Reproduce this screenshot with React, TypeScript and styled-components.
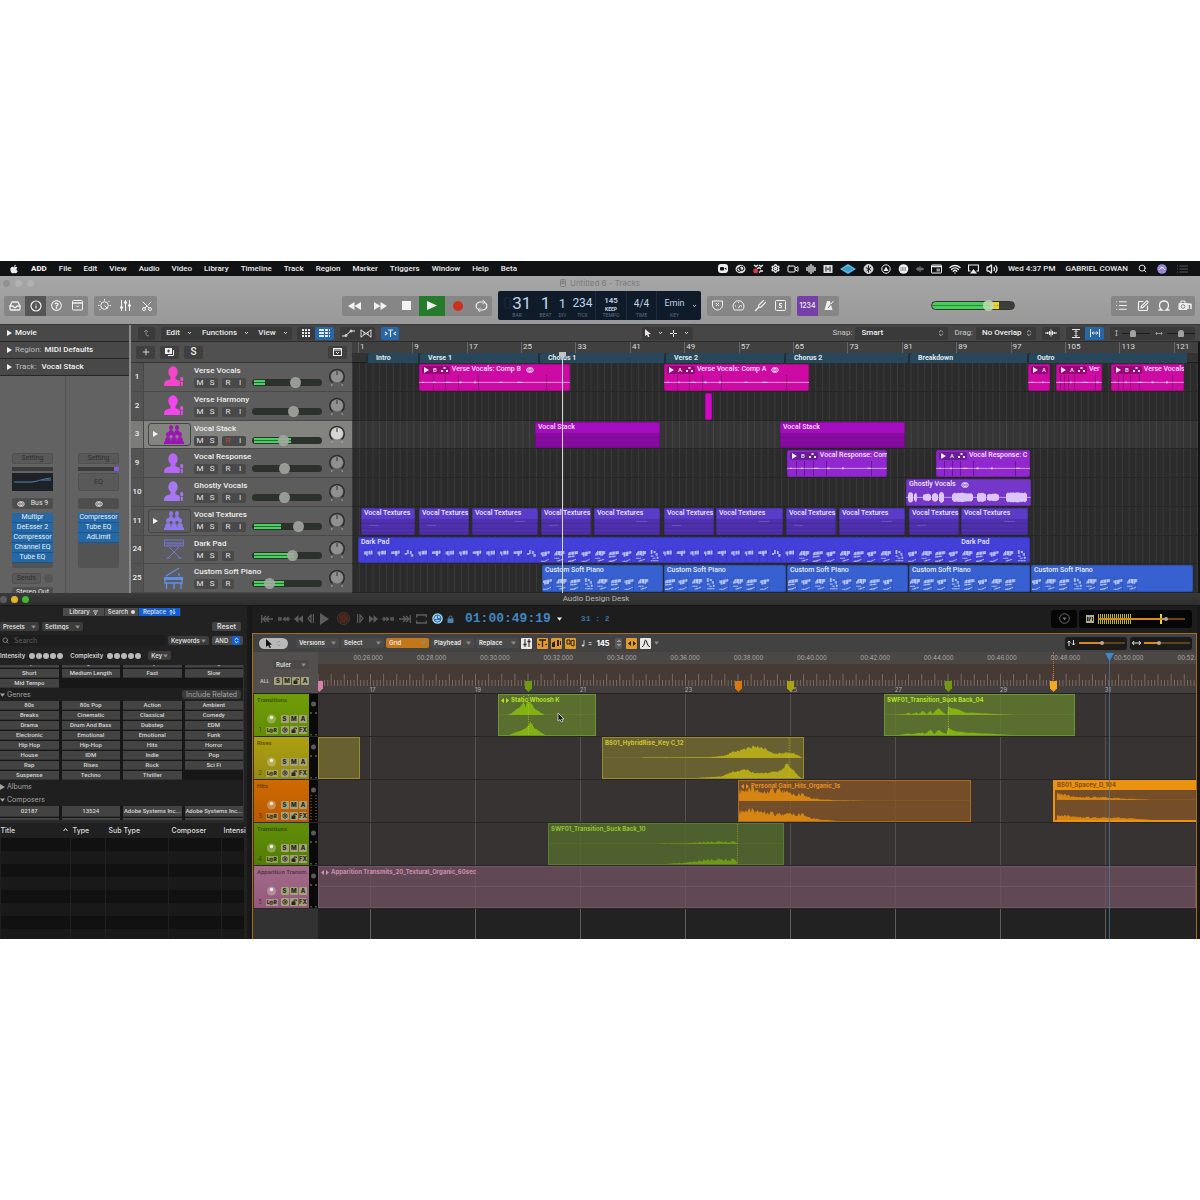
import React from 'react';
import styled, { createGlobalStyle, css } from 'styled-components';
import { ChevronsUpDown, Inbox, Info, List, Plus, Scissors, Search, Settings, SquarePen, Video, Volume2, Wifi } from 'lucide-react';
import { FaApple, FaRegQuestionCircle } from 'react-icons/fa';

const sans = "'Inter', 'Liberation Sans', sans-serif";
const ui = "'Roboto', 'Liberation Sans', sans-serif";
const mono = "'Liberation Mono', monospace";

const Global = createGlobalStyle`
  * { box-sizing: border-box; }
  body { margin: 0; background: #fff; font-family: ${sans}; color: #eee; }
  button, input, select { font: inherit; color: inherit; margin: 0; padding: 0; border: 0; background: none; border-radius: 0; }
  svg { display: block; flex: none; }
  table { border-collapse: collapse; }
`;

/* ---------- shared parts ---------- */

const Page = styled.main`min-height: 100vh; display: flex; flex-direction: column; justify-content: center;`;
const Desktop = styled.div`background: #1d1d1d; overflow: hidden; line-height: 1;`;
const Spacer = styled.div<{ $grow?: number }>`flex: ${p => p.$grow ?? 1} 1 0;`;
const Row = styled.div<{ $gap?: number }>`display: flex; align-items: center; gap: ${p => p.$gap ?? 0}px;`;
const Light = styled.span<{ $c: string; $s?: number }>`width: ${p => p.$s ?? 7}px; height: ${p => p.$s ?? 7}px; border-radius: 50%; background: ${p => p.$c};`;

type GlyphProps = { w: number; h: number; children: React.ReactNode };
const Glyph = ({ w, h, children }: GlyphProps) => (
  <svg width={w} height={h} viewBox={`0 0 ${w} ${h}`} fill="none" stroke="currentColor" strokeWidth={1} aria-hidden="true">{children}</svg>
);
const Solid = ({ w, h, d }: { w: number; h: number; d: string }) => (
  <Glyph w={w} h={h}><path d={d} fill="currentColor" stroke="none" /></Glyph>
);
const Chevron = () => <Glyph w={5} h={4}><path d="M1 1l1.5 1.700L4 1" strokeWidth={0.9} /></Glyph>;
const Triangle = () => <Solid w={5} h={4} d="M0 .5h5L2.5 3.800z" />;
const RightTri = () => <Solid w={5} h={6} d="M0 0l5 3-5 3z" />;

/* ---------- menu bar ---------- */

const MenuBar = styled.nav`
  height: 15px; background: #111214; display: flex; align-items: center; padding: 0 12px 0 9px;
  font-family: ${ui}; font-size: 8px; font-weight: 500; color: #ececec;
`;
const MenuList = styled.div`display: flex; align-items: center; gap: 12px;`;
const MenuItem = styled.button<{ $strong?: boolean }>`font-weight: ${p => (p.$strong ? 800 : 500)}; white-space: nowrap;`;
const StatusIcons = styled.div`display: flex; align-items: center; gap: 7px; margin-right: 10px;`;
const StatusText = styled.span`margin-right: 10px; white-space: nowrap;`;

const menus = ['File', 'Edit', 'View', 'Audio', 'Video', 'Library', 'Timeline', 'Track', 'Region', 'Marker', 'Triggers', 'Window', 'Help', 'Beta'];

const TopMenu = () => (
  <MenuBar>
    <MenuList>
      <MenuItem aria-label="Apple"><FaApple size={10} /></MenuItem>
      <MenuItem $strong>ADD</MenuItem>
      {menus.map(m => <MenuItem key={m}>{m}</MenuItem>)}
    </MenuList>
    <Spacer />
    <StatusIcons>
      <Glyph w={10} h={10}><rect x={0} y={0} width={10} height={9} rx={3} fill="#eee" stroke="none" /><rect x={2} y={3} width={4} height={3.5} rx={1} fill="#111" stroke="none" /><path d="M6.4 4.5l2-1v2.4z" fill="#111" stroke="none" /></Glyph>
      <Glyph w={11} h={10}><ellipse cx={5.5} cy={5} rx={5} ry={4.3} fill="#ddd" stroke="none" /><circle cx={4} cy={5.6} r={1.8} stroke="#111" /><circle cx={6.6} cy={4.4} r={2.2} stroke="#111" /></Glyph>
      <Glyph w={11} h={10}><path d="M1 1l2 1.5L5 1M6 1l2 1.5L10 1M4 5l2-1.5 2 1.5M7 7h3M6 8.5l1-1" strokeWidth={1.4} /><circle cx={2.6} cy={7} r={2.4} fill="#d5403b" stroke="none" /></Glyph>
      <Settings size={9} strokeWidth={3.5} />
      <Video size={12} strokeWidth={2} />
      <Glyph w={10} h={10}><path d="M1 3v4M3 1.5v7M5 0v10M7 1.500v7M9 3v4" strokeWidth={1.3} /></Glyph>
      <Glyph w={10} h={10}><rect x={0.5} y={1} width={9} height={8} fill="#ddd" stroke="none" /><path d="M3 2.5v5M7 2.5v5" stroke="#111" /><path d="M5 4v2" stroke="#111" /></Glyph>
      <Glyph w={16} h={10}><path d="M0 5l8-5 8 5-8 5z" fill="#5cb8e6" stroke="none" /><path d="M4 4v2M6 3v4M8 2v6M10 3v4M12 4v2" stroke="#1d6f9f" strokeWidth={0.8} /></Glyph>
      <Glyph w={11} h={10}><circle cx={5.5} cy={5} r={4.4} fill="#ccc" /><path d="M3 3.500l5 3M8 3L3.500 7M5.500 1.500v7" stroke="#222" /></Glyph>
      <Glyph w={10} h={10}><circle cx={5} cy={5} r={4.2} /><path d="M5 2.5l2.5 4.5h-5z" fill="#eee" stroke="none" /></Glyph>
      <Glyph w={11} h={10}><circle cx={5.5} cy={5} r={4.8} fill="#eee" stroke="none" /><path d="M2.5 4h6M2.5 6h6" stroke="#444" strokeDasharray="1 .5" /></Glyph>
      <Glyph w={8} h={10}><path d="M0 5h8M2 3v4M4 2v6M6 3.5v3" stroke="#888" /></Glyph>
      <Glyph w={11} h={10}><rect x={0.5} y={1} width={10} height={8} rx={0.5} /><path d="M1 2.5h9" strokeWidth={1.5} /><rect x={5.5} y={4.5} width={3.5} height={3} fill="#999" stroke="none" /></Glyph>
      <Wifi size={12} strokeWidth={2.8} />
      <Glyph w={11} h={10}><path d="M2.500 7H.5V1h10v6h-2" strokeWidth={1.2} /><path d="M5.500 5l3.500 4.500H2z" fill="#eee" stroke="none" /></Glyph>
      <Volume2 size={12} strokeWidth={2.6} />
    </StatusIcons>
    <StatusText>Wed 4:37 PM</StatusText>
    <StatusText>GABRIEL COWAN</StatusText>
    <Row $gap={10}>
      <Search size={9} strokeWidth={2.5} />
      <Glyph w={10} h={10}><circle cx={5} cy={5} r={4.8} fill="#8d8fd8" stroke="none" /><path d="M2 6q3-5 6 0" stroke="#fff" /><path d="M2 4q3 5 6 0" stroke="#e25bb0" /></Glyph>
      <Glyph w={11} h={8}><path d="M0 1h1M2.5 1H11M0 4h1M2.5 4H11M0 7h1M2.5 7H11" stroke="#55595c" /></Glyph>
    </Row>
  </MenuBar>
);

/* ---------- Logic window: title and control bar ---------- */

const Chrome = styled.header`background: linear-gradient(#a6a6a6, #999); height: 49px; color: #f2f2f2; border-bottom: 1px solid #3a3a3a;`;
const TitleRow = styled.div`
  height: 14px; display: grid; grid-template-columns: 1fr auto 1fr; align-items: center; padding: 0 3px;
  font-size: 8px; color: #7d7d7d;
`;
const ControlBar = styled.div`height: 31px; display: flex; align-items: center; padding: 0 5px 0 4px;`;
const Cluster = styled.div<{ $ml?: number }>`display: flex; border-radius: 2px; overflow: hidden; background: #868686; margin-left: ${p => p.$ml ?? 0}px;`;
const BarButton = styled.button<{ $w?: number; $bg?: string }>`
  width: ${p => p.$w ?? 21}px; height: 20px; display: flex; align-items: center; justify-content: center;
  background: ${p => p.$bg ?? 'transparent'}; font-size: 7px; font-weight: 500;
`;
const Lcd = styled.div`
  height: 29px; width: 203px; margin: 0 6px; background: #101b2a; border-radius: 2px; color: #bcd3e8;
  display: grid; grid-template-columns: 37px 20px 14px 26px 31px 30px 36px 9px; text-align: center; font-family: ${ui};
`;
const LcdCell = styled.div<{ $line?: boolean }>`
  display: flex; flex-direction: column; align-items: center; justify-content: flex-end; padding-bottom: 2px; gap: 1px;
  border-left: 1px solid ${p => (p.$line ? '#1d2b3c' : 'transparent')};
`;
const LcdValue = styled.span<{ $s: number }>`font-size: ${p => p.$s}px; line-height: 17px; font-weight: 400;`;
const LcdStack = styled.span`font-size: 8px; line-height: 10px; font-weight: 600; display: flex; flex-direction: column;`;
const Ghost = styled.span`color: #1a2738;`;
const Tiny = styled.small`font-size: 5px; line-height: 6px; font-weight: 700;`;
const LcdLabel = styled.span`font-size: 5px; line-height: 5px; color: #5d6d7e;`;

const Master = styled.input`
  appearance: none; width: 84px; height: 9px; border-radius: 5px; border: 1px solid #333;
  background: linear-gradient(#3c3f38 0 0) 100% 0 / 15px 9px no-repeat, linear-gradient(90deg, #2c8a3c 0 58px, #c9b32a 58px) 0 3px / 100% 1px no-repeat, linear-gradient(90deg, #48cc5c 0 58px, #ecd12f 58px);
  &::-webkit-slider-thumb { appearance: none; width: 11px; height: 11px; border-radius: 50%; background: rgba(190, 220, 180, .85); }
`;

const ControlStrip = () => (
  <Chrome>
    <TitleRow>
      <Row $gap={5}><Light $c="#929292" /><Light $c="#b1b1b1" /><Light $c="#b1b1b1" /></Row>
      <Row $gap={4}>
        <Glyph w={6} h={8}><rect x={0.5} y={0.5} width={5} height={7} rx={1} /><rect x={2} y={2} width={2} height={2.5} /></Glyph>
        Untitled 6 - Tracks
      </Row>
      <span />
    </TitleRow>
    <ControlBar>
      <Cluster>
        <BarButton aria-label="Library"><Inbox size={12} strokeWidth={2.6} /></BarButton>
        <BarButton aria-label="Inspector" $bg="#555"><Info size={12} strokeWidth={2.4} /></BarButton>
        <BarButton aria-label="Quick help"><FaRegQuestionCircle size={11} /></BarButton>
        <BarButton aria-label="Toolbar"><Glyph w={11} h={11}><rect x={0.5} y={0.5} width={10} height={9.5} rx={1} /><path d="M1 3h9" strokeWidth={1.5} /><path d="M4 5.5l1.5 1.5L7 5.5" /></Glyph></BarButton>
      </Cluster>
      <Cluster $ml={6}>
        <BarButton aria-label="Smart controls"><Glyph w={13} h={13}><circle cx={6.5} cy={6.5} r={3.8} /><path d="M6.5 6.5l3 3M6.5 0v1.5M11.5 2l-1 1M1.5 2l1 1M0 6.5h1.5M11.5 6.5H13M1.5 11l1-1" /></Glyph></BarButton>
        <BarButton aria-label="Mixer"><Glyph w={13} h={13}><path d="M2.5 1v11M6.5 1v11M10.5 1v11" /><path d="M1 8.5h3M5 3.5h3M9 6.5h3" strokeWidth={2} /></Glyph></BarButton>
        <BarButton aria-label="Editors"><Scissors size={12} strokeWidth={2} transform="rotate(-90)" /></BarButton>
      </Cluster>
      <Spacer $grow={185} />
      <Cluster>
        <BarButton $w={25} aria-label="Rewind"><Solid w={13} h={8} d="M6.5 0v8L0 4zM13 0v8L6.5 4z" /></BarButton>
        <BarButton $w={26} aria-label="Forward"><Solid w={13} h={8} d="M0 0v8l6.5-4zM6.5 0v8L13 4z" /></BarButton>
        <BarButton $w={26} aria-label="Stop"><Solid w={9} h={9} d="M0 0h9v9H0z" /></BarButton>
        <BarButton $w={26} $bg="#257a2b" aria-label="Play"><Solid w={10} h={9} d="M0 0l10 4.500-10 4.500z" /></BarButton>
        <BarButton $w={25} aria-label="Record"><Glyph w={10} h={10}><circle cx={5} cy={5} r={5} fill="#cf2f1f" stroke="none" /></Glyph></BarButton>
        <BarButton $w={22} aria-label="Cycle"><Glyph w={13} h={12}><path d="M3.5 9.500A4.500 4 0 0 1 5 2h3.500M9.500 2.500a4.500 4 0 0 1-1.500 7.500H4.500" strokeWidth={1.2} /><path d="M7.500 0l2.500 2-2.500 2M5.500 8L3 10l2.500 2" /></Glyph></BarButton>
      </Cluster>
      <Lcd>
        <LcdCell><LcdValue $s={17}><Ghost>0</Ghost>31</LcdValue><LcdLabel>BAR</LcdLabel></LcdCell>
        <LcdCell><LcdValue $s={17}>1</LcdValue><LcdLabel>BEAT</LcdLabel></LcdCell>
        <LcdCell><LcdValue $s={13}>1</LcdValue><LcdLabel>DIV</LcdLabel></LcdCell>
        <LcdCell><LcdValue $s={12}>234</LcdValue><LcdLabel>TICK</LcdLabel></LcdCell>
        <LcdCell $line><LcdStack>145<Tiny>KEEP</Tiny></LcdStack><LcdLabel>TEMPO</LcdLabel></LcdCell>
        <LcdCell $line><LcdValue $s={10}>4/4</LcdValue><LcdLabel>TIME</LcdLabel></LcdCell>
        <LcdCell $line><LcdValue $s={9}>Emin</LcdValue><LcdLabel>KEY</LcdLabel></LcdCell>
        <Row><Chevron /></Row>
      </Lcd>
      <Cluster>
        <BarButton aria-label="Replace"><Glyph w={11} h={11}><path d="M.5 1h10v4a5 5 0 0 1-10 0z" /><path d="M4 3l3 3M7 3L4 6" /></Glyph></BarButton>
        <BarButton aria-label="Low latency"><Glyph w={13} h={11}><path d="M2.5 10a5.500 5.500 0 1 1 8 0z" /><path d="M6.5 8l2-3M3 6h1M9 6h1M6.5 2v1" /></Glyph></BarButton>
        <BarButton aria-label="Tuner"><Glyph w={12} h={12}><path d="M1 11l4-4M5 7q-1-2 1-3l4-4M5 7q2 1 3-1l4-4" strokeWidth={1.2} /></Glyph></BarButton>
        <BarButton aria-label="Solo"><Glyph w={11} h={11}><rect x={0.5} y={0.5} width={10} height={10} rx={1} /><path d="M7 3.5H4.500v2h2v2H4" /></Glyph></BarButton>
      </Cluster>
      <Cluster $ml={6}>
        <BarButton $bg="#7440a8" aria-label="Count in">1234</BarButton>
        <BarButton aria-label="Metronome"><Glyph w={10} h={11}><path d="M3 1h3l2.500 9H.5z" fill="#eee" stroke="none" /><path d="M4 8l5-6" stroke="#777" /><path d="M7 4l2.500-3" /></Glyph></BarButton>
      </Cluster>
      <Spacer $grow={92} />
      <Master type="range" aria-label="Master volume" defaultValue={72} />
      <Spacer $grow={96} />
      <Cluster>
        <BarButton aria-label="List editors"><List size={13} strokeWidth={2} /></BarButton>
        <BarButton aria-label="Note pads"><SquarePen size={12} strokeWidth={2.4} /></BarButton>
        <BarButton aria-label="Apple loops"><Glyph w={12} h={11}><path d="M.5 10h3.500C0 7 1 1 6 1s6 6 2 9h3.500" strokeWidth={1.3} /></Glyph></BarButton>
        <BarButton aria-label="Browsers"><Glyph w={14} h={11}><rect x={0.5} y={3} width={9} height={7} rx={1} fill="#eee" stroke="none" /><path d="M3 3V1h4v2" /><circle cx={5} cy={6.5} r={1.8} stroke="#888" /><path d="M10 9V4l3 .5V9" strokeWidth={1.5} /></Glyph></BarButton>
      </Cluster>
    </ControlBar>
  </Chrome>
);

/* ---------- Logic window: inspector ---------- */

const LogicBody = styled.section`display: flex; height: 268px; overflow: hidden; background: #2a2a2a; font-family: ${ui};`;
const Inspector = styled.aside`flex: none; width: 131px; background: #626262; border-right: 2px solid #8a8a8a; display: flex; flex-direction: column;`;
const InspectorHead = styled.button`
  height: 17px; background: #484848; border-bottom: 1px solid #262626; display: flex; align-items: center; gap: 3px;
  padding-left: 7px; font-size: 8px; font-weight: 500; color: #f0f0f0; text-align: left; flex: none;
`;
const Dim = styled.span`color: #bdbdbd; font-weight: 400;`;
const Strips = styled.div`display: grid; grid-template-columns: 66px 1fr; flex: 1;`;
const Strip = styled.div`padding: 77px 12px 0; border-right: 1px solid #515151; display: flex; flex-direction: column;`;
const Slot = styled.button<{ $mt?: number; $h?: number; $dark?: boolean }>`
  height: ${p => p.$h ?? 11}px; margin-top: ${p => p.$mt ?? 0}px; flex: none; background: ${p => (p.$dark ? '#4d4d4d' : '#595959')};
  color: ${p => (p.$dark ? '#e4e4e4' : '#2f2f2f')}; font-size: 7px; border: 1px solid #505050; border-radius: 2px;
  display: flex; align-items: center; justify-content: center; gap: 6px; white-space: nowrap; width: 41px;
`;
const SendRow = styled.div`display: flex; align-items: center; gap: 3px; margin-top: 5px;`;
const SendSlot = styled(Slot)`width: 29px;`;
const Gain = styled.div<{ $dot?: boolean }>`height: 4px; margin: 3px 0 2px; width: 41px; background: ${p => (p.$dot ? 'linear-gradient(90deg, #3b3b3b 36px, #8a5ad8 36px)' : '#3b3b3b')};`;
const EqView = styled.div`width: 41px; height: 18px; background: #1e2125; color: #4f86ae;`;
const Inserts = styled.div`margin-top: 4px; width: 41px; height: 55px; background: #535353; border-radius: 2px;`;
const Insert = styled.button`
  display: block; width: 100%; height: 10px; background: #2468a5; border-bottom: 1px solid #1b558b; color: #e8f0f8;
  font-size: 7px; line-height: 9px; white-space: nowrap; text-align: center;
`;
const Link = () => <Glyph w={8} h={6}><circle cx={3} cy={3} r={2.2} /><circle cx={5} cy={3} r={2.2} /></Glyph>;

const InspectorPane = () => (
  <Inspector>
    <InspectorHead><RightTri />Movie</InspectorHead>
    <InspectorHead><RightTri /><Dim>Region:</Dim>MIDI Defaults</InspectorHead>
    <InspectorHead><RightTri /><Dim>Track:</Dim>&nbsp;Vocal Stack</InspectorHead>
    <Strips>
      <Strip>
        <Slot>Setting</Slot>
        <Gain />
        <EqView><Glyph w={41} h={18}><path d="M2 9h18l5-1 8-2 6-1" strokeWidth={1.2} /><path d="M25 8l14-3v3z" fill="#35556f" stroke="none" /></Glyph></EqView>
        <Slot $mt={7} $dark><Link />Bus 9</Slot>
        <Inserts>{['Multipr', 'DeEsser 2', 'Compressor', 'Channel EQ', 'Tube EQ'].map(n => <Insert key={n}>{n}</Insert>)}</Inserts>
        <SendRow><SendSlot>Sends</SendSlot><Light $c="#555" $s={9} /></SendRow>
        <Slot $mt={3} $dark>Stereo Out</Slot>
      </Strip>
      <Strip>
        <Slot>Setting</Slot>
        <Gain $dot />
        <Slot $h={18}>EQ</Slot>
        <Slot $mt={7} $dark aria-label="Format"><Link /></Slot>
        <Inserts>{['Compressor', 'Tube EQ', 'AdLimit'].map(n => <Insert key={n}>{n}</Insert>)}</Inserts>
      </Strip>
    </Strips>
  </Inspector>
);

/* ---------- Logic window: tracks ---------- */

const TracksPane = styled.div`flex: 1; min-width: 0; display: flex; flex-direction: column;`;
const TracksBar = styled.div`
  height: 17px; background: #464646; border-bottom: 1px solid #2b2b2b; display: flex; align-items: center; padding: 0 5px;
  font-size: 8px; font-weight: 500; color: #e6e6e6; flex: none;
`;
const Pod = styled.div<{ $ml?: number }>`display: flex; align-items: center; height: 13px; background: #3a3a3a; border-radius: 2px; margin-left: ${p => p.$ml ?? 6}px; overflow: hidden;`;
const PodButton = styled.button<{ $w: number; $on?: boolean }>`
  width: ${p => p.$w}px; height: 13px; display: flex; align-items: center; justify-content: center; gap: 7px; background: ${p => (p.$on ? '#2767a8' : 'transparent')};
`;
const FieldLabel = styled.label`display: flex; align-items: center; gap: 3px; color: #c9c9c9; font-weight: 400;`;
const PopWrap = styled.span<{ $w: number }>`
  width: ${p => p.$w}px; height: 13px; background: #3a3a3a; border-radius: 2px; display: flex; align-items: center; padding: 0 3px 0 6px; color: #eee; font-weight: 500; margin-right: 6px;
`;
const PlainSelect = styled.select`appearance: none; flex: 1; min-width: 0; width: 100%; outline: 0; option { color: #111; }`;
const ZoomSlider = styled.input`
  appearance: none; width: 28px; height: 9px; background: linear-gradient(#1e1e1e 0 0) 0 4px / 100% 1px no-repeat;
  &::-webkit-slider-thumb { appearance: none; width: 6px; height: 7px; border-radius: 3px 3px 1px 1px; background: #a2a2a2; }
`;

const TracksToolbar = () => (
  <TracksBar>
    <Pod $ml={2}><PodButton $w={17} aria-label="Hierarchy"><Glyph w={7} h={8}><path d="M1 3l2-2 2 2M3 1v4q0 2 3 2" stroke="#888" /></Glyph></PodButton></Pod>
    <Pod>
      <PodButton $w={36}>Edit <Chevron /></PodButton>
      <PodButton $w={57}>Functions <Chevron /></PodButton>
      <PodButton $w={38}>View <Chevron /></PodButton>
    </Pod>
    <Pod $ml={5}>
      <PodButton $w={18} aria-label="Grid"><Glyph w={8} h={8}><path d="M0 1h8M0 4h8M0 7h8" strokeWidth={2} strokeDasharray="2 1" /></Glyph></PodButton>
      <PodButton $w={19} $on aria-label="Lanes"><Glyph w={11} h={8}><path d="M0 1h11M0 4h11M0 7h11" strokeWidth={2} strokeDasharray="5 1 3 1" /></Glyph></PodButton>
    </Pod>
    <Pod>
      <PodButton $w={17} aria-label="Automation"><Glyph w={13} h={8}><path d="M0 7h3l6-5h4" /><circle cx={4} cy={6.5} r={1} /><circle cx={9} cy={2} r={1} /></Glyph></PodButton>
      <PodButton $w={18} aria-label="Flex"><Glyph w={12} h={9}><path d="M1 .5v8M11 .5v8M1 1l10 7M11 1L1 8M4 3v3M8 3v3" strokeWidth={0.9} /></Glyph></PodButton>
    </Pod>
    <Pod><PodButton $w={18} $on aria-label="Catch"><Glyph w={13} h={8}><path d="M4 1h5M6.5 1v7M1 3l2 1.500L1 6M12 3l-2 1.500L12 6" strokeWidth={1.2} /></Glyph></PodButton></Pod>
    <Spacer $grow={240} />
    <Pod $ml={0}>
      <PodButton $w={25} aria-label="Pointer tool"><Solid w={6} h={8} d="M0 0l6 5-2.500.2L4.500 8H3L2 5.700 0 7z" /><Chevron /></PodButton>
      <PodButton $w={26} aria-label="Marquee tool"><Glyph w={7} h={7}><path d="M3.5 0v7M0 3.500h7" strokeDasharray="3 1" /></Glyph><Chevron /></PodButton>
    </Pod>
    <Spacer $grow={138} />
    <FieldLabel>Snap:<PopWrap $w={93}><PlainSelect><option>Smart</option></PlainSelect><ChevronsUpDown size={8} /></PopWrap></FieldLabel>
    <FieldLabel>Drag:<PopWrap $w={60}><PlainSelect><option>No Overlap</option></PlainSelect><ChevronsUpDown size={8} /></PopWrap></FieldLabel>
    <Pod $ml={0}><PodButton $w={18} aria-label="Waveform zoom"><Glyph w={12} h={8}><path d="M0 4h12M2.500 3v2M4.500 2v4M6 .5v7M7.500 2v4M9.500 3v2" /></Glyph></PodButton></Pod>
    <Pod>
      <PodButton $w={19} aria-label="Vertical fit"><Glyph w={8} h={9}><path d="M0 .5h8M0 8.500h8M4 1.500v6M2.500 3L4 1.500 5.500 3M2.500 6L4 7.500 5.500 6" /></Glyph></PodButton>
      <PodButton $w={19} $on aria-label="Horizontal fit"><Glyph w={10} h={8}><path d="M.5 0v8M9.500 0v8M2 4h6M3.500 2.500L2 4l1.500 1.500M6.500 2.500L8 4 6.500 5.500" /></Glyph></PodButton>
    </Pod>
    <Pod>
      <PodButton $w={12} aria-label="Vertical zoom"><Glyph w={5} h={8}><path d="M1 2.500L2.500 1 4 2.500M1 5.500L2.500 7 4 5.500M2.500 1v6" stroke="#aaa" strokeWidth={0.8} /></Glyph></PodButton>
      <ZoomSlider type="range" aria-label="Vertical zoom level" defaultValue={35} />
      <PodButton $w={17} aria-label="Horizontal zoom"><Glyph w={8} h={5}><path d="M2 1L.8 2.500 2 4M6 1l1.200 1.500L6 4M1 2.500h6" stroke="#aaa" strokeWidth={0.8} /></Glyph></PodButton>
      <ZoomSlider type="range" aria-label="Horizontal zoom level" defaultValue={50} />
    </Pod>
  </TracksBar>
);

const TracksMain = styled.div`flex: 1; display: flex; min-height: 0;`;
const HeaderColumn = styled.div`flex: none; width: 221px; display: flex; flex-direction: column; background: #5c5c5c;`;
const ListBar = styled.div`height: 21px; flex: none; background: #505050; display: flex; align-items: center; gap: 5px; padding: 0 5px; border-bottom: 1px solid #333;`;
const SquareButton = styled.button`width: 19px; height: 13px; background: #3f3f3f; border-radius: 2px; display: flex; align-items: center; justify-content: center; font-size: 10px; font-weight: 500;`;
const EightRows = styled.div`flex: 1; display: grid; grid-template-rows: repeat(8, minmax(0, 1fr)); min-height: 0;`;

const TrackRow = styled.div<{ $on?: boolean }>`
  display: grid; grid-template-columns: 13px 50px 58px 70px 1fr; background: ${p => (p.$on ? '#83837f' : 'transparent')};
  border-bottom: 1px solid #4a4a4a; min-height: 0;
`;
const TrackNo = styled.span<{ $on?: boolean }>`display: flex; align-items: center; justify-content: center; font-size: 8px; font-weight: 500; background: ${p => (p.$on ? '#7b7b77' : '#535353')}; border-right: 1px solid #474747;`;
const TrackIcon = styled.div<{ $c: string }>`display: flex; align-items: center; justify-content: flex-end; padding-right: 10px; color: ${p => p.$c};`;
const StackBox = styled.button<{ $c: string }>`
  display: flex; align-items: center; justify-content: space-between; margin: 2px 3px 2px 4px; padding: 0 6px 0 4px; border: 1px solid #454545; border-radius: 3px; color: ${p => p.$c};
`;
const White = styled.span`color: #f5f5f5;`;
const TrackText = styled.div`padding-top: 3px; display: flex; flex-direction: column; gap: 2px;`;
const TrackName = styled.span`font-size: 8px; font-weight: 500; line-height: 10px; white-space: nowrap;`;
const Toggles = styled.div`display: flex; gap: 4px;`;
const TogglePair = styled.div`display: flex; background: #494949; border-radius: 2px;`;
const Toggle = styled.button<{ $c?: string }>`width: 12px; height: 10px; font-size: 8px; line-height: 10px; text-align: center; color: ${p => p.$c ?? '#e2e2e2'};`;
const FaderCell = styled.div`padding-top: 16px;`;
const Fader = styled.input<{ $level: number }>`
  appearance: none; display: block; width: 70px; height: 7px; border-radius: 4px;
  background: linear-gradient(#2a6b34 0 0) 2px 3px / ${p => p.$level}px 1px no-repeat, linear-gradient(#4bcf60 0 0) 2px 1px / ${p => p.$level}px 5px no-repeat, #2b322b;
  &::-webkit-slider-thumb { appearance: none; width: 11px; height: 11px; border-radius: 50%; background: rgba(165, 170, 163, .88); }
`;
const KnobButton = styled.button`display: flex; justify-content: center; align-items: center; padding-right: 1px;`;
const PanKnob = ({ on }: { on?: boolean }) => (
  <Glyph w={18} h={20}>
    <path d="M4.500 15.500a7.300 7.300 0 1 1 9 0" stroke="#2b2b2b" strokeWidth={1.4} />
    <circle cx={9} cy={9.5} r={6} fill={on ? '#d6d6d6' : '#909090'} stroke="none" />
    <path d="M9 4v4" stroke="#333" /><path d="M3 18h1.500M13.500 18H15" stroke="#bbb" />
  </Glyph>
);

const Singer = () => (
  <Glyph w={20} h={21}><g fill="currentColor" stroke="none">
    <ellipse cx={9} cy={6} rx={4.7} ry={5.8} /><path d="M6.500 10h5v3.200l3.500 1.300q.8.400.8 1.500v4H0c0-3 .5-4.800 2.500-5.500l4-1.300z" />
    <rect x={16.3} y={11} width={2.9} height={4.5} rx={1.4} /><path d="M16.600 16h2.400L18.600 20h-1.600z" />
  </g></Glyph>
);
const Choir = () => (
  <Glyph w={20} h={19}><g fill="currentColor" stroke="none">
    <ellipse cx={7} cy={2.5} rx={2} ry={2.5} /><ellipse cx={13} cy={2.5} rx={2} ry={2.5} />
    <path d="M4.500 8q0-3 2.500-3t2.500 3v2h-5zM10.500 8q0-3 2.500-3t2.500 3v2h-5z" />
    <ellipse cx={4} cy={9.5} rx={2} ry={2.5} /><ellipse cx={10} cy={9.5} rx={2} ry={2.5} /><ellipse cx={16} cy={9.5} rx={2} ry={2.5} />
    <path d="M1.200 17v-2q0-3 2.800-3t2.800 3v2zM7.200 17v-2q0-3 2.800-3t2.800 3v2zM13.200 17v-2q0-3 2.800-3t2.800 3v2zM0 16.500h20V19H0z" />
  </g></Glyph>
);
const Keyboard = () => (
  <Glyph w={20} h={20}><path d="M.5 1h19v6H.5zM.5 4h19" /><path d="M3 4v3M5 4v3M7 4v3M9 4v3M11 4v3M13 4v3M15 4v3M17 4v3" strokeWidth={0.8} /><path d="M5 8l11 11M15 8L4 19M2 19h4M14 19h4" /></Glyph>
);
const Piano = () => (
  <Glyph w={20} h={22}><path d="M2 9L15 1M15 9V6" strokeWidth={1.3} /><path d="M0 10h19v3H0z" fill="currentColor" stroke="none" /><path d="M1 13v3h17v-3M2.500 16v6M10 16v6M17 16v6" strokeWidth={1.4} /></Glyph>
);

type Track = { no: number; name: string; color: string; icon: React.ReactNode; stack?: boolean; on?: boolean; input?: boolean; level: number; fader: number };
const tracks: Track[] = [
  { no: 1, name: 'Verse Vocals', color: '#f545cc', icon: <Singer />, input: true, level: 11, fader: 64 },
  { no: 2, name: 'Verse Harmony', color: '#f545ee', icon: <Singer />, input: true, level: 0, fader: 61 },
  { no: 3, name: 'Vocal Stack', color: '#9c14b4', icon: <Choir />, stack: true, on: true, input: true, level: 37, fader: 44 },
  { no: 9, name: 'Vocal Response', color: '#b567f5', icon: <Singer />, input: true, level: 0, fader: 45 },
  { no: 10, name: 'Ghostly Vocals', color: '#a578f2', icon: <Singer />, input: true, level: 0, fader: 45 },
  { no: 11, name: 'Vocal Textures', color: '#9077ea', icon: <Choir />, stack: true, input: true, level: 27, fader: 69 },
  { no: 24, name: 'Dark Pad', color: '#7076d0', icon: <Keyboard />, level: 40, fader: 59 },
  { no: 25, name: 'Custom Soft Piano', color: '#5f8fe6', icon: <Piano />, level: 30, fader: 20 },
];

const TrackHeader = ({ t }: { t: Track }) => (
  <TrackRow $on={t.on}>
    <TrackNo $on={t.on}>{t.no}</TrackNo>
    {t.stack
      ? <StackBox $c={t.color} aria-label={`Open ${t.name}`}><White><RightTri /></White>{t.icon}</StackBox>
      : <TrackIcon $c={t.color}>{t.icon}</TrackIcon>}
    <TrackText>
      <TrackName>{t.name}</TrackName>
      <Toggles>
        <TogglePair><Toggle>M</Toggle><Toggle>S</Toggle></TogglePair>
        <TogglePair><Toggle $c={t.on ? '#c2453a' : undefined}>R</Toggle>{t.input && <Toggle>I</Toggle>}</TogglePair>
      </Toggles>
    </TrackText>
    <FaderCell><Fader type="range" aria-label={`${t.name} volume`} $level={t.level} defaultValue={t.fader} /></FaderCell>
    <KnobButton aria-label={`${t.name} pan`}><PanKnob on={t.on} /></KnobButton>
  </TrackRow>
);

/* Horizontal positions are in units of the visible arrange width. */
const ARRANGE = 846;
const arrange = (v: number) => `${(v / ARRANGE) * 100}%`;

const Arrange = styled.div`flex: 1; min-width: 0; position: relative; display: flex; flex-direction: column; background: #2b2b2b; overflow: hidden; border-right: 2px solid #151515;`;
const Ruler = styled.div`height: 11px; flex: none; display: flex; background: #404040; font-size: 8px; line-height: 10px; color: #dcdcdc;`;
const RulerLead = styled.span`flex: 0 0 0.7%;`;
const RulerMark = styled.span`flex: 0 0 6.43%; border-left: 1px solid #666; padding-left: 1px; &:last-child { flex-basis: 2.8%; }`;
const Markers = styled.div`height: 10px; flex: none; display: grid; grid-template-columns: 14fr 52fr 120fr 126fr 120fr 124fr 119fr 160fr 11fr; background: #333; border-bottom: 1px solid #1a1a1a;`;
const Marker = styled.span`
  background: #29475a; border-left: 2px solid #1c2f3d; border-radius: 4px 0 0 0; padding-left: 8px; font-size: 7px; line-height: 10px; font-weight: 700; color: #dfe8ee; white-space: nowrap;
`;
const Lane = styled.div<{ $on?: boolean }>`
  position: relative; border-bottom: 1px solid #262626; background-color: ${p => (p.$on ? '#353535' : 'transparent')};
  background-image: linear-gradient(90deg, rgba(255, 255, 255, .07) 1px, transparent 1px); background-size: calc(100% / 124) 100%;
`;
const ClipBox = styled.div<{ $c: string }>`
  position: absolute; top: 1px; bottom: 0; background: ${p => p.$c}; border-radius: 2px; overflow: hidden; color: #fff;
  display: flex; flex-direction: column; box-shadow: inset 0 0 0 1px rgba(0, 0, 0, .15);
`;
const ClipLabel = styled.div`height: 10px; flex: none; padding: 1px 3px 0; display: flex; align-items: center; gap: 2px; font-size: 7px; font-weight: 500; white-space: nowrap; color: rgba(255, 255, 255, .9);`;
const Loop = styled.span`padding-left: 3px;`;
const Take = styled.span`height: 8px; padding: 0 2px; line-height: 8px; background: rgba(0, 0, 0, .28); border-radius: 2px; display: flex; align-items: center; gap: 4px; font-size: 6px;`;
const Art = styled.svg`width: 100%; flex: 1; min-height: 0;`;
const Playhead = styled.div`
  position: absolute; top: 10px; bottom: 0; width: 1px; background: #d8d8d8;
  &::before { content: ''; position: absolute; top: 0; left: -3px; width: 7px; height: 7px; background: #c4c4c4; clip-path: polygon(0 0, 100% 0, 100% 50%, 50% 100%, 0 50%); }
`;

type Kind = 'audio' | 'plain' | 'fill' | 'texture' | 'pad' | 'piano';
type Clip = { at: number; len: number; label?: string; take?: string; loop?: boolean; kind: Kind; again?: boolean };

const lanes: { color: string; clips: Clip[] }[] = [
  { color: '#cd0aa3', clips: [
    { at: 67, len: 151, label: 'Verse Vocals: Comp B', take: 'B', loop: true, kind: 'audio' },
    { at: 312, len: 145, label: 'Verse Vocals: Comp A', take: 'A', loop: true, kind: 'audio' },
    { at: 676, len: 22, take: 'A', kind: 'audio' },
    { at: 704, len: 46, take: 'A', label: 'Ver', kind: 'audio' },
    { at: 759, len: 73, take: 'B', label: 'Verse Vocals', kind: 'audio' },
  ] },
  { color: '#cd0ac4', clips: [{ at: 353, len: 7, kind: 'plain' }] },
  { color: '#a40dbd', clips: [{ at: 183, len: 125, label: 'Vocal Stack', kind: 'fill' }, { at: 428, len: 125, label: 'Vocal Stack', kind: 'fill' }] },
  { color: '#9128cf', clips: [{ at: 435, len: 100, label: 'Vocal Response: Com', take: 'B', kind: 'audio' }, { at: 584, len: 94, label: 'Vocal Response: C', take: 'A', kind: 'audio' }] },
  { color: '#7437ca', clips: [{ at: 554, len: 125, label: 'Ghostly Vocals', loop: true, kind: 'audio' }] },
  { color: '#5a3ccb', clips: ([[9, 54], [67, 50], [120, 66], [189, 50], [242, 66], [312, 50], [364, 67], [434, 50], [487, 66], [557, 50], [609, 67]] as const).map(([at, len]) => ({ at, len, label: 'Vocal Textures', kind: 'texture' as Kind })) },
  { color: '#4240d8', clips: [{ at: 6, len: 672, label: 'Dark Pad', kind: 'pad', again: true }] },
  { color: '#3761d0', clips: ([[190, 121], [312, 122], [435, 121], [557, 121], [679, 162]] as const).map(([at, len]) => ({ at, len, label: 'Custom Soft Piano', kind: 'piano' as Kind })) },
];

const sparse = [
  'M0 4.500l4-.5v5H2V7.500H0zM4.500 4l4-.5v4h-4z',
  'M0 4.500h2.500V9H1V7H0zM3 4l5.500-.5v4H3z',
  'M0 4.500l8.500-1v3L6 7v2H4V7H0z',
  'M0 6h2v2H0zM2 3h2v4H2zM5 4h2v3H5zM6 7h2.500v3H6z',
];
const dense = [
  'M1 4l9-1v3l-10 1.500V6zM0 8.500l7-1V9l-7 1zM0 13l4-.5 4-1.500v1l-4 2-4 .3z',
  'M0 4.500L9 3v2.500L6 6v2l-5 1V7H0zM0 13h4l4-2v1l-4 2H0z',
  'M2 3h8v3L8 6.500V8H5V7L0 8V6zM0 10h5v1H0zM2 13l7-2v1l-6 2z',
  'M1 2h2v4H1zM4 3h2v2H4zM6 5h2v3H6zM1 7.500h3v1.500H1zM7 9h2v2H7zM3 10h3v1H3zM1 12.500h8v1H1z',
];

const MidiArt = ({ len, kind, at }: { len: number; kind: Kind; at: number }) => {
  const step = 13.6;
  const count = Math.floor((kind === 'piano' && at > 650 ? 122 : len) / step);
  return (
    <Art viewBox={`0 0 ${len} 17`} preserveAspectRatio="none" aria-hidden="true">
      {Array.from({ length: count }, (_, i) => {
        const full = kind === 'piano' || (i > 12 && i < 22) || i > 31;
        const set = full ? dense : sparse;
        const x = (kind === 'pad' ? 6 : 1) + i * step;
        return (
          <g key={i} transform={`translate(${x.toFixed(1)} ${full ? 1 : 0})`}>
            <path d={set[i % 9 === 3 ? 3 : (i + (at % 3)) % 3]} fill="rgba(205,214,255,.85)" />
            <path d="M3.200 1v13M6.500 1v13" stroke={kind === 'pad' ? '#4240d8' : '#3761d0'} strokeWidth={0.6} strokeOpacity={0.7} />
            <path d="M1 1v14M9 1v14" stroke="rgba(0,0,0,.12)" />
          </g>
        );
      })}
    </Art>
  );
};

/* Mirrored wave body with a rough edge, centred on the clip's middle line. */
const blob = (x: number, w: number, h: number) => {
  const top: string[] = [];
  const bottom: string[] = [];
  for (let i = 0; i <= w; i++) {
    const n = Math.abs(Math.sin((x + i) * 7.13) * 91.7) % 1;
    const edge = Math.min(1, 0.6 + Math.min(i, w - i) * 0.3);
    const r = Number((h * edge * (0.75 + 0.25 * n)).toFixed(1));
    top.push(`${x + i} ${8.5 - r}`);
    bottom.unshift(`${x + i} ${8.5 + r}`);
  }
  return `M${top.join('L')}L${bottom.join('L')}Z`;
};

const AudioArt = ({ len, big }: { len: number; big?: boolean }) => {
  const blobs: [number, number, number][] = big
    ? [[2, 5, 6], [8, 3, 5.5], [17, 8, 4], [26, 6, 4.5], [33, 5, 6], [46, 21, 5], [71, 9, 5], [81, 12, 4], [100, 21, 5.5]]
    : [[3, 2, 1], [14, 2, 1], [26, 6, 0.7], [40, 3, 1], [55, 2, 1.4], [80, 4, 0.8], [98, 6, 0.7]];
  return (
    <Art viewBox={`0 0 ${len} 17`} preserveAspectRatio="none" aria-hidden="true">
      {!big && len > 30 && [0.09, 0.17, 0.26, 0.39, 0.84].map(f => <path key={f} d={`M${Math.round(f * len) + 0.5} 1v15`} stroke="rgba(30,0,40,.4)" />)}
      <path d={`M0 8.500h${len}`} stroke="rgba(255,255,255,.7)" strokeWidth={0.8} />
      {blobs.filter(b => b[0] < len - 4).map(([x, w, h]) => <path key={x} d={blob(x, w, h)} fill="#dcc6f8" />)}
    </Art>
  );
};

const FillArt = ({ len, texture }: { len: number; texture?: boolean }) => (
  <Art viewBox={`0 0 ${len} 17`} preserveAspectRatio="none" aria-hidden="true">
    <rect y={1} width={len} height={16} fill="rgba(40,10,70,.22)" />
    <path d={`M0 5.500h${len}M0 10.500h${len}M0 14.500h${len}`} stroke="rgba(20,0,40,.14)" />
    {texture && <path d={len > 60 ? `M${len * 0.64} 3.500h11` : `M${len * 0.16} 7.500h9`} stroke="rgba(200,190,255,.25)" />}
  </Art>
);

const ClipView = ({ clip, color }: { clip: Clip; color: string }) => (
  <ClipBox $c={color} style={{ left: arrange(clip.at), width: arrange(clip.len) }}>
    {clip.kind !== 'plain' && (
      <ClipLabel>
        {clip.take && <Take><RightTri />{clip.take}{clip.len > 30 && <Solid w={7} h={5} d="M0 3h2v2H0zM2.500 0h2v2h-2zM5 3h2v2H5z" />}</Take>}
        {clip.label}
        {clip.loop && <Loop><Link /></Loop>}
        {clip.again && <><Spacer $grow={16} /><span>{clip.label}</span><Spacer /></>}
      </ClipLabel>
    )}
    {clip.kind === 'audio' && <AudioArt len={clip.len} big={clip.label === 'Ghostly Vocals'} />}
    {(clip.kind === 'fill' || clip.kind === 'texture') && <FillArt len={clip.len} texture={clip.kind === 'texture'} />}
    {(clip.kind === 'pad' || clip.kind === 'piano') && <MidiArt len={clip.len} kind={clip.kind} at={clip.at} />}
  </ClipBox>
);

const LogicTracks = () => (
  <TracksPane>
    <TracksToolbar />
    <TracksMain>
      <HeaderColumn>
        <ListBar>
          <SquareButton aria-label="Add track"><Plus size={10} /></SquareButton>
          <SquareButton aria-label="Duplicate track"><Glyph w={10} h={8}><rect x={0} y={0} width={7} height={6} fill="#eee" stroke="none" /><path d="M3.500 1.500v3M2 3h3" stroke="#444" /><path d="M8.500 2v5.500H3" /></Glyph></SquareButton>
          <SquareButton>S</SquareButton>
          <Spacer />
          <SquareButton aria-label="Track options"><Glyph w={9} h={8}><rect x={0.5} y={0.5} width={8} height={7} /><path d="M1 2h7M3 4l1.500 1.500L6 4" /></Glyph></SquareButton>
        </ListBar>
        <EightRows>{tracks.map(t => <TrackHeader key={t.no} t={t} />)}</EightRows>
      </HeaderColumn>
      <Arrange>
        <Ruler><RulerLead />{Array.from({ length: 16 }, (_, i) => <RulerMark key={i}>{1 + i * 8}</RulerMark>)}</Ruler>
        <Markers>
          <span />
          {['Intro', 'Verse 1', 'Chorus 1', 'Verse 2', 'Chorus 2', 'Breakdown', 'Outro'].map(m => <Marker key={m}>{m}</Marker>)}
        </Markers>
        <EightRows>
          {lanes.map((l, i) => (
            <Lane key={i} $on={i === 2}>{l.clips.map(c => <ClipView key={c.at} clip={c} color={l.color} />)}</Lane>
          ))}
        </EightRows>
        <Playhead style={{ left: arrange(210) }} />
      </Arrange>
    </TracksMain>
  </TracksPane>
);

/* ---------- Audio Design Desk window ---------- */

const DeskTitle = styled.header`
  height: 13px; background: linear-gradient(#3a3a3a, #2e2e2e); display: grid; grid-template-columns: 1fr auto 1fr; align-items: center;
  font-family: ${ui}; font-size: 8px; line-height: 12px; color: #b9b9b9; border-bottom: 1px solid #161616; padding-right: 8px;
`;
const DeskBody = styled.section`display: flex; height: 333px; overflow: hidden;`;

const Browser = styled.aside`flex: none; width: 250px; padding-right: 3px; background: #222; font-size: 6px; font-weight: 600; color: #d6d6d6; display: flex; flex-direction: column; border-right: 3px solid #191919;`;
const Tabs = styled.div`height: 14px; flex: none; display: flex; justify-content: center; padding-top: 2px;`;
const Tab = styled.button<{ $on?: boolean; $w: number }>`
  width: ${p => p.$w}px; height: 8px; background: ${p => (p.$on ? '#1260d8' : '#4b4b4b')}; display: flex; align-items: center; justify-content: center; gap: 3px; border-right: 1px solid #333;
`;
const FilterRow = styled.div<{ $mt?: number }>`height: 13px; margin-top: ${p => p.$mt ?? 0}px; flex: none; display: flex; align-items: center; gap: 3px; padding-right: 1px;`;
const MiniWrap = styled.label<{ $w: number; $bg?: string; $h?: number }>`
  width: ${p => p.$w}px; height: ${p => p.$h ?? 9}px; background: ${p => p.$bg ?? '#3c3c3c'}; border-radius: 2px; display: flex; align-items: center; padding: 0 3px; color: #dcdcdc;
`;
const MiniArrow = styled.span`color: #8a8a8a; display: flex;`;
const Reset = styled.button`width: 29px; height: 9px; background: #444; border-radius: 2px; font-size: 7px; line-height: 9px; margin-right: 2px;`;
const SearchBox = styled.label`flex: 1; min-width: 0; height: 11px; background: #1d1d1d; display: flex; align-items: center; gap: 5px; padding-left: 2px; color: #999;`;
const SearchInput = styled.input`flex: 1; min-width: 0; font-size: 7px; font-weight: 400; &::placeholder { color: #5f5f5f; }`;
const AndBadge = styled.span`width: 8px; height: 9px; background: #1260d8; border-radius: 2px; display: flex; align-items: center; justify-content: center; color: #fff;`;
const Dots = styled.fieldset`border: 0; margin: 0 4px 0 0; padding: 0; display: flex; align-items: center; gap: 1px; legend { float: left; padding: 0 3px 0 0; }`;
const Dot = styled.input`appearance: none; width: 6px; height: 6px; border-radius: 50%; background: #b9b9b9;`;
const Facets = styled.div`margin-top: 3px; height: 155px; flex: none; background: #171717; overflow: hidden; border-right: 1px solid #333; font-family: ${ui}; font-weight: 500;`;
const FacetGrid = styled.div`display: grid; grid-template-columns: repeat(4, minmax(0, 1fr)); gap: 1px 3px;`;
const Facet = styled.button<{ $cut?: boolean; $h?: number }>`
  height: ${p => (p.$cut ? 3 : p.$h ?? 9)}px; overflow: hidden; background: #434343; border-bottom: 1px solid #333; white-space: nowrap;
  display: flex; align-items: ${p => (p.$cut ? 'flex-end' : 'center')}; justify-content: center; line-height: 8px;
`;
const FacetHead = styled.div`height: 13px; background: #1f1f1f; display: flex; align-items: center; justify-content: space-between; color: #a5a5a5; font-family: ${sans}; font-size: 7px; font-weight: 400; padding-right: 2px;`;
const HeadToggle = styled.button`display: flex; align-items: center; gap: 2px;`;
const Related = styled.button`background: #3b3b3b; border-radius: 3px; height: 9px; padding: 0 4px; line-height: 9px;`;
const Splitter = styled.div`height: 3px; flex: none; background: #292929;`;
const Results = styled.table`width: 100%; table-layout: fixed; font-size: 7px; font-weight: 500; color: #dedede;
  th { height: 15px; padding: 0 0 0 3px; text-align: left; font-weight: 500; background: #202020; white-space: nowrap; }
  th:first-child { padding-left: 0; }
  th:last-child, th:nth-child(2) { padding-left: 2px; }
  td { height: 13px; padding: 0; border-left: 1px solid #202020; }
  tbody tr:nth-child(odd) { background: #111; }
  tbody tr:nth-child(even) { background: #191919; }
`;
const SortHead = styled.span`display: flex; justify-content: space-between; padding-right: 3px;`;

const MiniSelect = ({ w, label, bg, h }: { w: number; label: string; bg?: string; h?: number }) => (
  <MiniWrap $w={w} $bg={bg} $h={h}><PlainSelect aria-label={label}><option>{label}</option></PlainSelect><MiniArrow><Triangle /></MiniArrow></MiniWrap>
);
const Rating = ({ name }: { name: string }) => (
  <Dots><legend>{name}</legend>{[1, 2, 3, 4, 5].map(n => <Dot key={n} type="radio" name={name} aria-label={`${name} ${n}`} />)}</Dots>
);

const moods = ['Short', 'Medium Length', 'Fast', 'Slow', 'Mid Tempo'];
const genres = ['80s', '80s Pop', 'Action', 'Ambient', 'Breaks', 'Cinematic', 'Classical', 'Comedy', 'Drama', 'Drum And Bass', 'Dubstep', 'EDM', 'Electronic', 'Emotional', 'Emotional', 'Funk', 'Hip Hop', 'Hip-Hop', 'Hits', 'Horror', 'House', 'IDM', 'Indie', 'Pop', 'Rap', 'Rises', 'Rock', 'Sci Fi', 'Suspense', 'Techno', 'Thriller'];

const BrowserPane = () => (
  <Browser>
    <Tabs>
      <Tab $w={42}>Library <Glyph w={5} h={5}><path d="M0 1h5M1 3h3M2 4.500h1" /></Glyph></Tab>
      <Tab $w={34}>Search <Light $c="#ddd" $s={4} /></Tab>
      <Tab $w={42} $on>Replace <Glyph w={7} h={6}><path d="M2 6V1M.5 2.500L2 1l1.500 1.500M5 0v5M3.800 3.500L5 5l1.500-1.500" /></Glyph></Tab>
    </Tabs>
    <FilterRow><MiniSelect w={39} label="Presets" /><MiniSelect w={41} label="Settings" /><Spacer /><Reset>Reset</Reset></FilterRow>
    <FilterRow $mt={1}>
      <SearchBox><Search size={7} strokeWidth={2.5} /><SearchInput type="search" placeholder="Search" aria-label="Search" /></SearchBox>
      <MiniSelect w={41} label="Keywords" />
      <MiniWrap $w={31} $bg="#4a4a4a"><PlainSelect aria-label="Match"><option>AND</option></PlainSelect><AndBadge><ChevronsUpDown size={7} strokeWidth={3} /></AndBadge></MiniWrap>
    </FilterRow>
    <FilterRow $mt={2}><Rating name="Intensity" /><Rating name="Complexity" /><MiniSelect w={23} label="Key" /></FilterRow>
    <Facets>
      <FacetGrid>
        {['Complex', 'Organic', 'Simple', 'Long'].map(m => <Facet key={m} $cut>{m}</Facet>)}
        {moods.map(m => <Facet key={m}>{m}</Facet>)}
      </FacetGrid>
      <FacetHead><HeadToggle><Triangle />Genres</HeadToggle><Related>Include Related</Related></FacetHead>
      <FacetGrid>{genres.map((g, i) => <Facet key={i}>{g}</Facet>)}</FacetGrid>
      <FacetHead><HeadToggle><RightTri />Albums</HeadToggle></FacetHead>
      <FacetHead><HeadToggle><Triangle />Composers</HeadToggle></FacetHead>
      <FacetGrid>
        {['02187', '13524', 'Adobe Systems Inc...', 'Adobe Systems Inc...'].map((c, i) => <Facet key={i} $h={11}>{c}</Facet>)}
        {[0, 1, 2, 3].map(i => <Facet key={i} $cut aria-label="More composers" />)}
      </FacetGrid>
    </Facets>
    <Splitter />
    <Results>
      <colgroup><col width={70} /><col width={35} /><col width={63} /><col width={53} /><col /></colgroup>
      <thead><tr>
        <th><SortHead>Title<Glyph w={5} h={6}><path d="M.5 4l2-2.500L4.500 4" /></Glyph></SortHead></th>
        <th>Type</th><th>Sub Type</th><th>Composer</th><th>Intensi</th>
      </tr></thead>
      <tbody>{Array.from({ length: 8 }, (_, r) => <tr key={r}><td /><td /><td /><td /><td /></tr>)}</tbody>
    </Results>
  </Browser>
);

/* ---------- desk: transport and tools ---------- */

const Studio = styled.div`flex: 1; min-width: 0; display: flex; flex-direction: column; padding: 0 3px 0 2px; background: #171717;`;
const Transport = styled.div`height: 27px; flex: none; background: #1d1d1d; display: flex; align-items: center; gap: 2px; padding: 0 5px 2px 8px; color: #5c5c5c;`;
const TransportButton = styled.button<{ $w: number }>`width: ${p => p.$w}px; height: 14px; display: flex; align-items: center; justify-content: center;`;
const Timecode = styled.output`margin-left: 8px; font: 700 13px/16px ${mono}; color: #4187c2;`;
const BeatCode = styled.output`margin-left: 12px; font: 700 8px/10px ${mono}; color: #3973a8;`;
const BlackBox = styled.div<{ $w: number }>`width: ${p => p.$w}px; height: 18px; background: #060606; border-radius: 3px; display: flex; align-items: center; justify-content: center; gap: 4px;`;
const OutMeter = styled.input`
  appearance: none; width: 87px; height: 10px;
  background: linear-gradient(90deg, #dd8a18 68px, #6b4310 68px) 0 4px / 100% 2px no-repeat,
    linear-gradient(90deg, transparent 33px, #060606 33px 62px, #e0d043 62px 64px, #060606 64px),
    repeating-linear-gradient(90deg, #b5b548 0 1px, #060606 1px 2px);
  &::-webkit-slider-thumb { appearance: none; width: 4px; height: 4px; border-radius: 50%; background: #aaa; }
`;

const Editor = styled.div`flex: 1; border: 1px solid #a86a14; border-bottom: 0; display: flex; flex-direction: column; min-height: 0;`;
const ToolRow = styled.div`height: 18px; flex: none; background: #424242; display: flex; align-items: center; gap: 2px; padding: 0 4px 0 6px; font-size: 6px; font-weight: 700; color: #e0e0e0;`;
const PointerPill = styled.button`width: 29px; height: 11px; border-radius: 6px; background: #b9b9b9; color: #111; display: flex; align-items: center; justify-content: center; gap: 5px; margin-right: 6px;`;
const IconTile = styled.button<{ $on?: boolean }>`width: 11px; height: 11px; margin-right: 1px; border-radius: 1px; background: ${p => (p.$on ? '#e29a2a' : '#e8e8e8')}; color: #2a2216; display: flex; align-items: center; justify-content: center;`;
const Tempo = styled.label`display: flex; align-items: center; gap: 3px; margin: 0 2px; color: #d8d8d8; white-space: nowrap;`;
const TempoInput = styled.input`width: 16px; font-size: 7px; font-weight: 800; text-align: center; color: #fff;`;
const Stepper = styled.button`width: 7px; height: 11px; border-radius: 2px; background: #5a5a5a; display: flex; align-items: center; justify-content: center; margin-right: 2px;`;
const DarkBox = styled.div`width: 62px; height: 13px; border-radius: 3px; background: #1a1a1a; display: flex; align-items: center; justify-content: center; gap: 3px; margin-left: 1px;`;
const AmberSlider = styled.input<{ $v: number }>`
  appearance: none; width: 46px; height: 8px; background: linear-gradient(90deg, #d48a1e ${p => p.$v}%, #5f4318 ${p => p.$v}%) 0 3px / 100% 2px no-repeat;
  &::-webkit-slider-thumb { appearance: none; width: 4px; height: 4px; border-radius: 50%; background: #b5aa9a; }
`;

const TransportBar = () => (
  <Transport>
    <TransportButton $w={14} aria-label="To start"><Glyph w={12} h={8}><path d="M.7 0v8M2 4h10M5 1L2 4l3 3M8 1L5 4l3 3" strokeWidth={1.3} /></Glyph></TransportButton>
    <TransportButton $w={15} aria-label="Previous marker"><Glyph w={12} h={6}><path d="M0 2h3v2H0zM5 3h7M7.500 1l-2 2 2 2M10.500 1l-2 2 2 2" strokeWidth={1.3} /></Glyph></TransportButton>
    <TransportButton $w={10} aria-label="Back"><Solid w={9} h={8} d="M4.500 0v8L0 4zM9 0v8L4.500 4z" /></TransportButton>
    <TransportButton $w={10} aria-label="Step back"><Glyph w={7} h={9}><path d="M4 1L1 4.500 4 8zM6.500 0v9" strokeWidth={1.3} /></Glyph></TransportButton>
    <TransportButton $w={14} aria-label="Play"><Solid w={9} h={12} d="M0 0l9 6-9 6z" /></TransportButton>
    <TransportButton $w={20} aria-label="Record"><Glyph w={13} h={13}><circle cx={6.5} cy={6.5} r={6} stroke="#4a3a34" /><circle cx={6.5} cy={6.5} r={5} fill="#4d2519" stroke="none" /></Glyph></TransportButton>
    <TransportButton $w={11} aria-label="Step forward"><Glyph w={7} h={9}><path d="M3 1l3 3.500L3 8zM.5 0v9" strokeWidth={1.3} /></Glyph></TransportButton>
    <TransportButton $w={11} aria-label="Ahead"><Solid w={9} h={8} d="M0 0v8l4.500-4zM4.500 0v8L9 4z" /></TransportButton>
    <TransportButton $w={14} aria-label="Next marker"><Glyph w={12} h={6}><path d="M9 2h3v2H9zM0 3h7M4.500 1l2 2-2 2M1.500 1l2 2-2 2" strokeWidth={1.3} /></Glyph></TransportButton>
    <TransportButton $w={15} aria-label="To end"><Glyph w={12} h={8}><path d="M11.300 0v8M0 4h10M7 1l3 3-3 3M4 1l3 3-3 3" strokeWidth={1.3} /></Glyph></TransportButton>
    <TransportButton $w={14} aria-label="Loop"><Glyph w={11} h={10}><path d="M.7 3.500V1h9.600v2.500M.7 6.500V9h9.600V6.500" strokeWidth={1.4} /></Glyph></TransportButton>
    <TransportButton $w={14} aria-label="Sync"><Glyph w={11} h={11}><circle cx={5.5} cy={5.5} r={5.3} fill="#a7d0ee" stroke="none" /><circle cx={5.5} cy={5.5} r={3.5} stroke="#2a6fae" /><path d="M5.500 2v3.500H9M2 6.500h7" stroke="#2a6fae" /></Glyph></TransportButton>
    <TransportButton $w={9} aria-label="Lock"><Glyph w={7} h={8}><rect x={0.5} y={3.5} width={6} height={4.5} fill="#4d84b5" stroke="none" /><path d="M2 4V2.500a1.500 1.500 0 0 1 3 0V4" stroke="#4d84b5" /></Glyph></TransportButton>
    <Timecode>01:00:49:19</Timecode>
    <TransportButton $w={14} aria-label="Timecode format"><White><Triangle /></White></TransportButton>
    <BeatCode>31 : 2</BeatCode>
    <Spacer />
    <BlackBox $w={26}><Glyph w={11} h={11}><circle cx={5.5} cy={5.5} r={4.8} stroke="#6a6a6a" /><path d="M3.500 4.500h4l-2 3z" fill="#777" stroke="none" /></Glyph></BlackBox>
    <BlackBox $w={113}><Glyph w={8} h={8}><rect width={8} height={8} fill="#b3ad98" stroke="none" /><path d="M1.500 2v4M3 2v4l2-4M6.500 2v4" stroke="#222" /></Glyph><OutMeter type="range" aria-label="Output level" defaultValue={79} /></BlackBox>
  </Transport>
);

const toolSelects = ['Versions', 'Select', 'Grid', 'Playhead', 'Replace'];
const Tools = () => (
  <ToolRow>
    <PointerPill aria-label="Pointer"><Solid w={6} h={9} d="M0 0l6 5.500-2.500.2L5 8.500 3.500 9 2.300 6.300 0 8z" /><Glyph w={4} h={7}><path d="M.5 2.500L2 1l1.500 1.500M.5 4.500L2 6l1.500-1.500" stroke="#999" /></Glyph></PointerPill>
    {toolSelects.map(s => <MiniSelect key={s} w={43} h={10} label={s} bg={s === 'Grid' ? '#c2781a' : '#4a4a4a'} />)}
    <IconTile aria-label="Mixer"><Glyph w={8} h={8}><path d="M2 0v8M6 0v8" /><path d="M.5 5.500h3M4.500 2.500h3" strokeWidth={1.5} /></Glyph></IconTile>
    <span />
    <IconTile $on aria-label="Snap"><Glyph w={9} h={8}><path d="M1 1h7M4.500 1v7M0 5l1.500 1M9 5L7.500 6" strokeWidth={1.3} /></Glyph></IconTile>
    <IconTile $on aria-label="Fade in"><Glyph w={9} h={8}><path d="M0 8V4l3-2v6zM5 1h2v6H5z" fill="#2a2216" stroke="none" /><path d="M8.500 2v4" /></Glyph></IconTile>
    <IconTile $on aria-label="Fade out"><Glyph w={9} h={8}><path d="M1 1h3v4H1zM5 2l3-1v6L5 6z" /></Glyph></IconTile>
    <Tempo><Glyph w={4} h={7}><path d="M3 0v5" strokeWidth={0.8} /><ellipse cx={2} cy={5.5} rx={1.4} ry={1} fill="currentColor" stroke="none" /></Glyph>=<TempoInput aria-label="Tempo" defaultValue="145" /></Tempo>
    <Stepper aria-label="Change tempo"><Glyph w={4} h={8}><path d="M.5 3L2 1.500 3.500 3M.5 5L2 6.500 3.500 5" /></Glyph></Stepper>
    <IconTile $on aria-label="Link"><Solid w={8} h={5} d="M0 2.500L3 0v5zM8 2.500L5 0v5z" /></IconTile>
    <IconTile aria-label="Envelope"><Glyph w={8} h={8}><path d="M0 8q2-1 2.500-4t1-3q1 0 1.500 3t3 4" /></Glyph></IconTile>
    <MiniArrow><Triangle /></MiniArrow>
    <Spacer />
    <DarkBox><Glyph w={9} h={6}><path d="M2 6V1M.5 2.500L2 1l1.500 1.500M6.500 0v5M5 3.500L6.500 5 8 3.500" /></Glyph><AmberSlider type="range" aria-label="Track height" $v={50} defaultValue={50} /></DarkBox>
    <DarkBox><Glyph w={9} h={6}><path d="M0 3h9M2 1L.5 3 2 5M7 1l1.500 2L7 5" /></Glyph><AmberSlider type="range" aria-label="Time zoom" $v={30} defaultValue={30} /></DarkBox>
  </ToolRow>
);

/* ---------- desk: timeline ---------- */

const SPAN = 878;
const span = (v: number) => `${(v / SPAN) * 100}%`;

const Timeline = styled.div`flex: 1; display: flex; min-height: 0;`;
const Heads = styled.div`flex: none; width: 65px; background: #323232; display: flex; flex-direction: column;`;
const RulerHead = styled.div`height: 42px; flex: none; background: #544f4f; padding: 8px 9px 0 7px; display: flex; flex-direction: column; gap: 8px; font-size: 6px; font-weight: 600; border-bottom: 1px solid #222;`;
const RulerPick = styled.div`display: flex; justify-content: flex-end;`;
const AllRow = styled.div`display: flex; gap: 1px; align-items: center; color: #c5c0c0; font-size: 5px;`;
const Chip = styled.button`width: 8px; height: 8px; border-radius: 1px; background: #a3a279; color: #26261c; font-size: 6px; font-weight: 800; line-height: 8px; text-align: center; display: flex; align-items: center; justify-content: center;`;
const DeskHead = styled.div`height: 43px; flex: none; display: grid; grid-template-columns: 1fr 9px; border-bottom: 1px solid #2a2a2a;`;
const HeadFace = styled.div<{ $c: string }>`background: ${p => p.$c}; padding: 2px 2px 2px 3px; display: flex; flex-direction: column; justify-content: space-between; min-width: 0; margin-left: 1px;`;
const HeadName = styled.span`font-family: ${ui}; font-size: 6px; font-weight: 500; color: rgba(20, 20, 0, .65); line-height: 7px; white-space: nowrap;`;
const HeadGrid = styled.div`display: grid; grid-template-columns: 6px 15px 8px 8px 8px; gap: 2px 1px; align-items: center; justify-items: center; justify-content: space-between;`;
const HeadNo = styled.span`font-size: 6px; color: rgba(20, 20, 0, .6);`;
const ChipText = styled.span`font-size: 5px; font-weight: 800; color: #22220f; background: rgba(190, 190, 150, .55); line-height: 7px; padding: 0 1px;`;

const padlock = <Glyph w={6} h={6}><rect x={0.5} y={2.5} width={4} height={3.5} fill="currentColor" stroke="none" /><path d="M3 3V1h2.500v1" /></Glyph>;
const MeterArt = ({ hot }: { hot?: boolean }) => (
  <Glyph w={9} h={42}>
    <rect width={9} height={42} fill="#0a0a0a" stroke="none" />
    <circle cx={4.5} cy={10} r={2.5} fill="#5a5a5a" stroke="none" />
    <path d={hot ? 'M2 15v26M7 15v26' : 'M2 18v2M7 18v2M2 40v1.500M7 40v1.500'} stroke={hot ? '#b0702a' : '#8f9050'} strokeDasharray={hot ? '1 2' : undefined} />
  </Glyph>
);

const Field = styled.div`flex: 1; min-width: 0; position: relative; display: flex; flex-direction: column; background: #222; overflow: hidden;`;
const TimeRow = styled.div`height: 12px; flex: none; display: flex; background: #4c4747; font-size: 6px; font-weight: 400; line-height: 11px; color: #b0aaa6;`;
const TimeLead = styled.span`flex: 0 0 2.1%;`;
const TimeMark = styled.span`flex: 0 0 7.22%; text-align: center;`;
const TickArt = styled.svg`width: 100%; height: 22px; flex: none; background: #453a34;`;
const BarRow = styled.div`height: 8px; flex: none; display: flex; background: #433f3e; border-bottom: 1px solid #222; font-size: 6px; line-height: 8px; color: #aaa;`;
const BarLead = styled.span`flex: 0 0 5.9%;`;
const BarMark = styled.span`flex: 0 0 11.96%; &:last-child { flex: 1 1 0; }`;
const DeskLanes = styled.div`flex: 1; background-image: linear-gradient(90deg, rgba(170, 165, 160, .45) 1px, transparent 1px); background-size: 11.96% 100%; background-position: 52px 0; display: flex; flex-direction: column;`;
const DeskLane = styled.div`height: 43px; flex: none; position: relative; border-bottom: 1px solid #282525; background: rgba(76, 67, 65, .5);`;
const Sound = styled.div<{ $c: string; $edge: string; $on?: boolean }>`
  position: absolute; top: 0; bottom: 0; background: ${p => p.$c}; border: 1px solid ${p => p.$edge}; color: ${p => p.$edge}; overflow: hidden;
  ${p => p.$on && css`border: 2px solid #eb9210; border-top: 0; border-right: 0;`}
`;
const SoundName = styled.div<{ $on?: boolean; $c: string }>`
  position: absolute; top: 0; left: 0; right: 0; height: 10px; padding-left: 2px; display: flex; align-items: center; gap: 2px;
  font-size: 6px; font-weight: 700; line-height: 10px; white-space: nowrap; color: ${p => p.$c};
  background: ${p => (p.$on ? '#eb9210' : 'transparent')};
`;
const SoundArt = styled.svg`position: absolute; inset: 0; width: 100%; height: 100%;`;
const Flag = styled.i<{ $c: string }>`
  position: absolute; top: 29px; width: 7px; height: 11px; margin-left: -3px; background: ${p => p.$c}; clip-path: polygon(0 0, 100% 0, 100% 65%, 50% 100%, 0 65%);
`;
const Cue = styled.i`
  position: absolute; top: 1px; bottom: 0; width: 1px; background: rgba(77, 125, 165, .7);
  &::before { content: ''; position: absolute; top: 0; left: -4px; width: 9px; height: 8px; background: #3f87c8; clip-path: polygon(0 0, 100% 0, 50% 100%); }
`;
const Dotted = styled.i`position: absolute; top: 0; height: 30px; border-left: 1px dotted #c9702a;`;
const Cursor = styled.span`position: absolute; top: 60px; color: #111;`;

/* An envelope is a list of [x, height] knots; the outline between them is roughened. */
type Knots = [number, number][];
const outline = (knots: Knots, base: number, rough: number) => {
  let d = `M${knots[0][0]} ${base}`;
  for (let i = 0; i < knots.length - 1; i++) {
    const [x0, h0] = knots[i];
    const [x1, h1] = knots[i + 1];
    for (let x = x0; x < x1; x += 1) {
      const h = h0 + ((h1 - h0) * (x - x0)) / (x1 - x0);
      const n = Math.abs(Math.sin(x * 12.9898) * 43758.5453) % 1;
      d += `L${x} ${(base - h * (1 - rough * n)).toFixed(1)}`;
    }
  }
  return `${d}L${knots[knots.length - 1][0]} ${base}Z`;
};

type SoundClip = { at: number; len: number; name?: string; arrows?: boolean; on?: boolean; c: string; edge: string; text: string; wave: string; up?: Knots; down?: Knots; rough?: number; sync?: number };
const G = { c: 'rgba(96,123,46,.82)', edge: '#6a9333', text: '#b4e028', wave: '#84b112' };
const Y = { c: 'rgba(122,112,48,.75)', edge: '#978c26', text: '#cfc430', wave: '#b3a91a' };
const O = { c: 'rgba(132,86,38,.78)', edge: '#b06a1e', text: '#e88f20', wave: '#d68412' };
const D = { c: 'rgba(82,106,45,.82)', edge: '#577d30', text: '#92c42a', wave: '#6f9a14' };
const P = { c: 'rgba(112,80,98,.75)', edge: '#765468', text: '#cf8fae', wave: '#8f5f77' };

const sounds: SoundClip[][] = [
  [
    { at: 180, len: 98, name: 'Static Whoosh K', arrows: true, ...G, sync: 30, rough: 0.2, up: [[9, 0], [13, 2], [18, 7], [22, 10], [25, 16], [27, 10], [29, 18], [33, 13], [38, 6], [47, 0]], down: [[11, 0], [16, 3], [22, 5], [28, 9], [32, 15], [36, 9], [40, 5], [47, 0]] },
    { at: 566, len: 191, name: 'SWF01_Transition_Suck Back_04', ...G, sync: 64, rough: 0.2, up: [[8, 0], [20, 1], [24, 3], [26, 1], [32, 3], [34, 1], [38, 5], [42, 1], [46, 5], [48, 1], [54, 8], [61, 1], [63, 0], [64, 9], [74, 7], [80, 3], [100, 2], [130, 0]], down: [[14, 0], [24, 2], [26, 1], [38, 3], [40, 1], [46, 6], [50, 1], [54, 6], [62, 1], [64, 8], [70, 5], [80, 3], [100, 2], [128, 0]] },
  ],
  [
    { at: 0, len: 42, ...Y },
    { at: 284, len: 202, name: 'BS01_HybridRise_Key C_12', ...Y, sync: 188, rough: 0.25, up: [[40, 0.5], [108, 1], [124, 3], [130, 7], [142, 10], [154, 14], [164, 11], [172, 5], [182, 6], [192, 6], [199, 2], [201, 0]], down: [[94, 0], [120, 2], [130, 7], [144, 10], [152, 6], [164, 6], [178, 8], [186, 16], [192, 10], [197, 3], [200, 0]] },
  ],
  [
    { at: 420, len: 233, name: 'Personal Gain_Hits_Organic_1s', arrows: true, ...O, rough: 0.5, up: [[0, 13], [10, 14], [14, 18], [22, 13], [35, 16], [44, 14], [52, 9], [66, 8], [76, 3], [100, 1], [130, 0]], down: [[0, 12], [12, 14], [26, 14], [40, 9], [52, 9], [66, 8], [76, 3], [100, 0]] },
    { at: 735, len: 143, name: 'BS01_Spacey_D_104', on: true, ...O, text: '#8a4d05', rough: 0.5, up: [[2, 9], [16, 5], [40, 4], [70, 2], [100, 0]], down: [[2, 6], [20, 5], [45, 3], [70, 3], [100, 0]] },
  ],
  [
    { at: 230, len: 236, name: 'SWF01_Transition_Suck Back_10', ...D, sync: 190, rough: 0.6, up: [[110, 0.5], [140, 1], [160, 3], [189, 3], [190, 0]], down: [[118, 0], [148, 3], [158, 6], [189, 6], [190, 0]] },
  ],
  [
    { at: 0, len: 878, name: 'Apparition Transmits_20_Textural_Organic_60sec', arrows: true, ...P },
  ],
];

const heads: { name: string; c: string; hot?: boolean }[] = [
  { name: 'Transitions', c: 'linear-gradient(#719e06, #618c06)' },
  { name: 'Rises', c: 'linear-gradient(#aea012, #948a12)' },
  { name: 'Hits', c: 'linear-gradient(#ce6a02, #b85a00)', hot: true },
  { name: 'Transitions', c: 'linear-gradient(#628f07, #527c06)' },
  { name: 'Apparition Transm...', c: 'linear-gradient(#a46a8a, #92597a)' },
];

const flags: [number, string][] = [[1, '#d87fae'], [210, '#6f9a0e'], [420, '#d9780e'], [472, '#ada214'], [630, '#6f9a0e'], [735, '#f5a81c']];

const SoundView = ({ s }: { s: SoundClip }) => (
  <Sound $c={s.c} $edge={s.edge} $on={s.on} style={{ left: span(s.at), width: span(s.len) }}>
    <SoundArt viewBox={`0 0 ${s.len} 42`} preserveAspectRatio="none" aria-hidden="true">
      {s.up && <path d={outline(s.up, 21, s.rough ?? 0)} fill={s.wave} />}
      {s.down && <path d={outline(s.down, 42, s.rough ?? 0)} fill={s.wave} />}
      {(s.up || s.name) && <path d={`M0 20.500h${s.len}`} stroke={s.wave} strokeOpacity={s.up ? 0.2 : 0.5} />}
      {s.sync && <path d={`M${s.sync} 0v42`} stroke={s.text} strokeDasharray="1 1.5" strokeOpacity={0.8} />}
    </SoundArt>
    {s.name && (
      <SoundName $on={s.on} $c={s.text}>
        {s.arrows && <Solid w={8} h={5} d="M0 2.500L3 0v5zM8 2.500L5 0v5z" />}
        {s.name}
      </SoundName>
    )}
  </Sound>
);

const DeskHeadView = ({ h, n }: { h: (typeof heads)[number]; n: number }) => (
  <DeskHead>
    <HeadFace $c={h.c}>
      <HeadName>{h.name}</HeadName>
      <HeadGrid>
        <span />
        <Glyph w={11} h={10}><circle cx={5.5} cy={5} r={4.5} fill="rgba(230,230,210,.35)" stroke="none" /><circle cx={5.5} cy={3.5} r={1.7} fill="#eee" stroke="none" /></Glyph>
        <Chip>S</Chip><Chip>M</Chip><Chip>A</Chip>
        <HeadNo>{n}</HeadNo>
        <ChipText>L◎R</ChipText>
        <Chip aria-label="Settings"><Settings size={6} strokeWidth={3} /></Chip><Chip aria-label="Lock">{padlock}</Chip><Chip>FX</Chip>
      </HeadGrid>
    </HeadFace>
    <MeterArt hot={h.hot} />
  </DeskHead>
);

const pad2 = (v: number) => String(v).padStart(2, '0');

const StudioPane = () => (
  <Studio>
    <TransportBar />
    <Editor>
      <Tools />
      <Timeline>
        <Heads>
          <RulerHead>
            <RulerPick><MiniSelect w={36} label="Ruler" bg="#4c4848" /></RulerPick>
            <AllRow>ALL <Spacer /><Chip>S</Chip><Chip>M</Chip><Chip aria-label="Lock all">{padlock}</Chip><Chip>A</Chip></AllRow>
          </RulerHead>
          {heads.map((h, i) => <DeskHeadView key={i} h={h} n={i + 1} />)}
        </Heads>
        <Field>
          <TimeRow><TimeLead />{Array.from({ length: 14 }, (_, i) => <TimeMark key={i}>00:{pad2(26 + i * 2)}.000</TimeMark>)}</TimeRow>
          <TickArt viewBox="0 0 878 22" preserveAspectRatio="none" aria-hidden="true">
            {Array.from({ length: 268 }, (_, i) => <path key={i} d={`M${(i * 3.2813).toFixed(2)} ${i % 4 === 0 ? 10 : 16}V22`} stroke="#85796f" strokeWidth={0.8} />)}
          </TickArt>
          <BarRow><BarLead />{[17, 19, 21, 23, 25, 27, 29, 31].map(b => <BarMark key={b}>{b}</BarMark>)}</BarRow>
          <DeskLanes>
            {sounds.map((row, i) => <DeskLane key={i}>{row.map(s => <SoundView key={s.at} s={s} />)}</DeskLane>)}
          </DeskLanes>
          {flags.map(([x, c]) => <Flag key={x} $c={c} style={{ left: span(x) }} />)}
          <Dotted style={{ left: span(735) }} />
          <Cue style={{ left: span(791) }} />
          <Cursor style={{ left: span(239) }}><Glyph w={8} h={11}><path d="M1 1v8l2-1.500L4.300 10l1.500-.7L4.600 7H7z" fill="#111" stroke="#ddd" strokeWidth={0.8} /></Glyph></Cursor>
        </Field>
      </Timeline>
    </Editor>
  </Studio>
);

export default function App() {
  return (
    <>
      <Global />
      <Page>
        <Desktop>
          <TopMenu />
          <ControlStrip />
          <LogicBody>
            <InspectorPane />
            <LogicTracks />
          </LogicBody>
          <DeskTitle>
            <Row $gap={4}><Light $c="#5c5c5c" /><Light $c="#e6b422" /><Light $c="#3fba2c" /></Row>
            Audio Design Desk
            <span />
          </DeskTitle>
          <DeskBody>
            <BrowserPane />
            <StudioPane />
          </DeskBody>
        </Desktop>
      </Page>
    </>
  );
}
